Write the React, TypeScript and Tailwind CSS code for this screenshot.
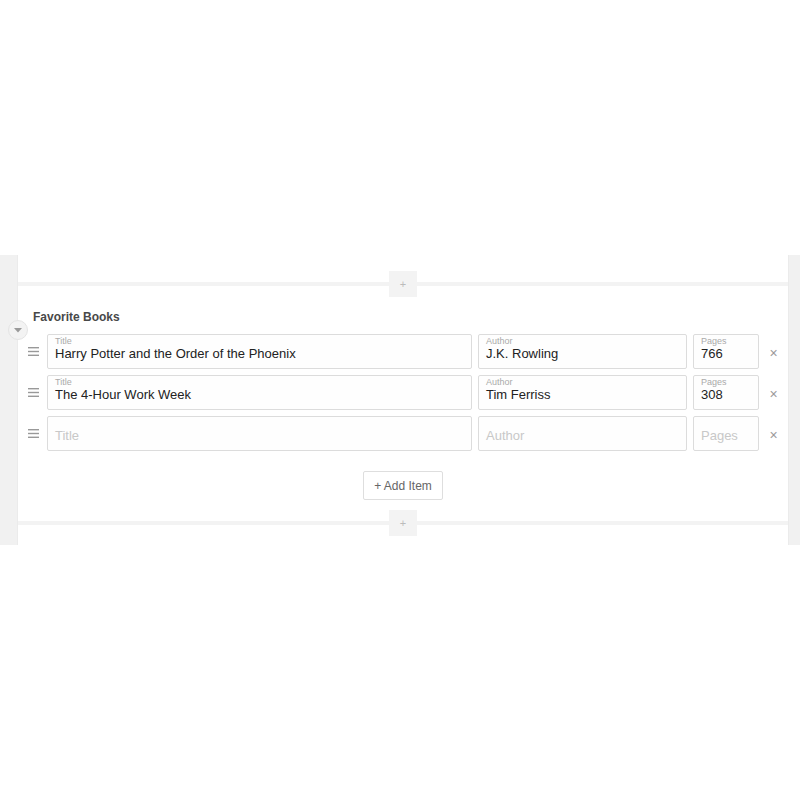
import { Fragment } from "react";

type Book = { title: string; author: string; pages: string };

const BOOKS: Book[] = [
  { title: "Harry Potter and the Order of the Phoenix", author: "J.K. Rowling", pages: "766" },
  { title: "The 4-Hour Work Week", author: "Tim Ferriss", pages: "308" },
  { title: "", author: "", pages: "" },
];

function Divider() {
  return (
    <div className="flex items-center h-[26px]">
      <div className="flex-1 h-[4px] bg-[#f3f3f3]" />
      <div className="w-[28px] h-[26px] bg-[#f3f3f3] flex items-center justify-center text-[11px] text-[#bbb] leading-none">
        +
      </div>
      <div className="flex-1 h-[4px] bg-[#f3f3f3]" />
    </div>
  );
}

function Field({ label, value, className }: { label: string; value: string; className: string }) {
  return (
    <div className={`${className} h-[35px] border border-[#dcdcdc] rounded-[2px] bg-[#fefefe] px-[7px] flex flex-col`}>
      {value ? (
        <>
          <span className="text-[9px] leading-[10px] text-[#aaa] mt-[1px]">{label}</span>
          <span className="text-[13px] leading-[16px] text-[#222]">{value}</span>
        </>
      ) : (
        <span className="text-[13px] leading-[16px] text-[#c8c8c8] mt-[11px]">{label}</span>
      )}
    </div>
  );
}

function Handle() {
  return (
    <svg width="11" height="9" viewBox="0 0 11 9" className="shrink-0">
      <rect x="0" y="0" width="11" height="1.4" fill="#999" />
      <rect x="0" y="3.8" width="11" height="1.4" fill="#999" />
      <rect x="0" y="7.6" width="11" height="1.4" fill="#999" />
    </svg>
  );
}

export default function App() {
  return (
    <div className="min-h-[800px] bg-white pt-[255px] font-['Liberation_Sans',Arial,sans-serif]">
      <div className="flex h-[290px]">
        <div className="w-[18px] bg-[#f1f1f1] border-r border-[#ebebeb] shrink-0" />
        <div className="flex-1 relative pt-[16px]">
          <Divider />
          <div className="pl-[15px] pt-[13px] text-[12px] font-bold text-[#484848] leading-[14px]">Favorite Books</div>
          <div className="absolute left-[-10px] top-[65px] w-[20px] h-[20px] rounded-full bg-[#f3f3f3] border border-[#e4e4e4] flex items-center justify-center">
            <svg width="8" height="5" viewBox="0 0 8 5">
              <path d="M0 0 L8 0 L4 4.5 Z" fill="#999" />
            </svg>
          </div>
          <div className="mt-[10px] flex flex-col gap-[6px]">
            {BOOKS.map((b, i) => (
              <Fragment key={i}>
                <div className="flex items-center pl-[10px]">
                  <Handle />
                  <div className="flex-1 flex gap-[6px] ml-[8px]">
                    <Field label="Title" value={b.title} className="flex-1" />
                    <Field label="Author" value={b.author} className="w-[209px]" />
                    <Field label="Pages" value={b.pages} className="w-[66px]" />
                  </div>
                  <div className="w-[29px] text-center text-[14px] text-[#9a9a9a] mt-[3px]">×</div>
                </div>
              </Fragment>
            ))}
          </div>
          <div className="flex justify-center mt-[20px]">
            <button className="h-[29px] px-[10px] border border-[#dedede] rounded-[2px] bg-white text-[12px] text-[#666]">
              + Add Item
            </button>
          </div>
          <div className="mt-[10px]">
            <Divider />
          </div>
        </div>
        <div className="w-[12px] bg-[#f1f1f1] border-l border-[#ebebeb] shrink-0" />
      </div>
    </div>
  );
}
